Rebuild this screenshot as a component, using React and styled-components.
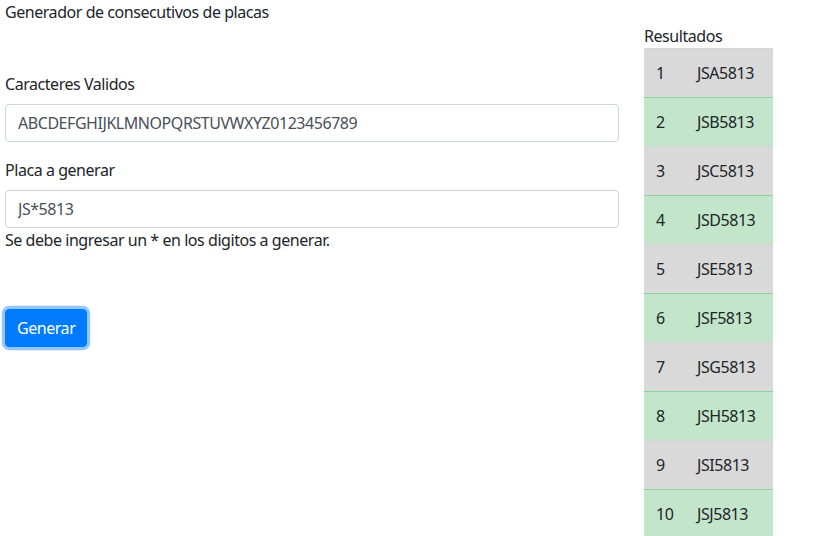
import React from "react";
import styled, { createGlobalStyle } from "styled-components";

const Global = createGlobalStyle`
  html, body { margin: 0; padding: 0; background: #fff; }
  body {
    font-family: "Noto Sans", "Liberation Sans", sans-serif;
    font-size: 16px;
    line-height: 24px;
    letter-spacing: -0.45px;
    color: #212529;
  }
  * { box-sizing: border-box; }
`;

const Page = styled.div`
  display: flex;
  align-items: flex-start;
  gap: 25px;
  padding-left: 5px;
`;

const Left = styled.div`
  width: 614px;
  display: flex;
  flex-direction: column;
`;

const Title = styled.div`
  margin-bottom: 48px;
`;

const Group = styled.div`
  display: flex;
  flex-direction: column;
  margin-bottom: ${(p) => p.$mb ?? 16}px;
`;

const Label = styled.label`
  margin-bottom: 8px;
`;

const Input = styled.input`
  height: 38px;
  width: 100%;
  padding: 6px 12px;
  font: inherit;
  letter-spacing: inherit;
  color: #495057;
  border: 1px solid #ced4da;
  border-radius: 4px;
  background: #fff;
  outline: none;
`;

const Help = styled.div``;

const Button = styled.button`
  align-self: flex-start;
  margin-top: 57px;
  height: 38px;
  padding: 6px 11px;
  font: inherit;
  letter-spacing: inherit;
  color: #fff;
  background: #007bff;
  border: 1px solid #007bff;
  border-radius: 4px;
  box-shadow: 0 0 0 3.2px rgba(38, 143, 255, 0.5);
`;

const Right = styled.div`
  width: 129px;
  padding-top: 24px;
  display: flex;
  flex-direction: column;
`;

const Table = styled.table`
  width: 129px;
  table-layout: fixed;
  border-collapse: collapse;
`;

const Row = styled.tr`
  background: ${(p) => (p.$green ? "#c3e6cb" : "#d9d9d9")};
`;

const Cell = styled.td`
  padding: 12px 12px;
  height: 49px;
  border-top: 1px solid ${(p) => (p.$green ? "#8fd19e" : "#d4d4d4")};
  white-space: nowrap;
  overflow: visible;
  width: ${(p) => p.$w || "auto"};
`;

const letters = "ABCDEFGHIJ".split("");

export default function App() {
  return (
    <>
      <Global />
      <Page>
        <Left>
          <Title>Generador de consecutivos de placas</Title>
          <Group>
            <Label>Caracteres Validos</Label>
            <Input readOnly value="ABCDEFGHIJKLMNOPQRSTUVWXYZ0123456789" />
          </Group>
          <Group $mb={0}>
            <Label>Placa a generar</Label>
            <Input readOnly value="JS*5813" />
            <Help>Se debe ingresar un * en los digitos a generar.</Help>
          </Group>
          <Button>Generar</Button>
        </Left>
        <Right>
          <div>Resultados</div>
          <Table>
            <tbody>
              {letters.map((l, i) => {
                const green = i % 2 === 1;
                return (
                  <Row key={l} $green={green}>
                    <Cell $green={green} $w="41px">{i + 1}</Cell>
                    <Cell $green={green}>JS{l}5813</Cell>
                  </Row>
                );
              })}
            </tbody>
          </Table>
        </Right>
      </Page>
    </>
  );
}
